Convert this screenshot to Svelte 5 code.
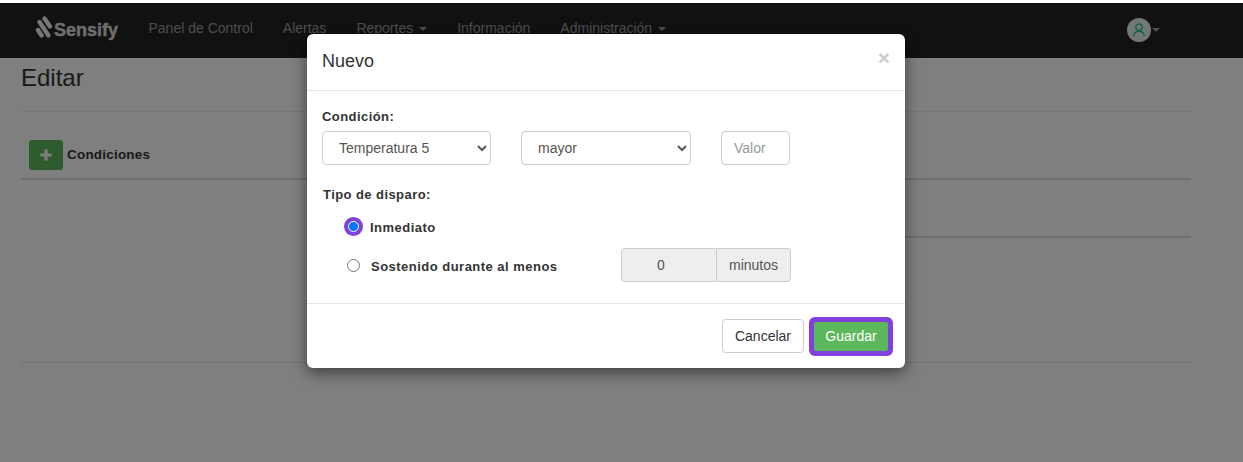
<script>
  const menu = [
    { label: 'Panel de Control' },
    { label: 'Alertas' },
    { label: 'Reportes', caret: true },
    { label: 'Información' },
    { label: 'Administración', caret: true }
  ];
</script>

<div class="page">
  <nav class="navbar">
    <div class="brand">
      <svg class="mark" width="20" height="24" viewBox="0 0 20 24" aria-hidden="true">
        <g fill="none" stroke="#eee" stroke-width="4.4" stroke-linecap="round">
          <path d="M9.5 3.5 L15 11.5" />
          <path d="M4.5 7 L13.5 20.5" />
          <path d="M3 15 L6.5 20.5" />
        </g>
      </svg>
      <span class="brand-text">Sensify</span>
    </div>
    <ul class="menu">
      {#each menu as item}
        <li>{item.label}{#if item.caret}<span class="caret"></span>{/if}</li>
      {/each}
    </ul>
    <div class="user">
      <span class="avatar">
        <svg width="16" height="16" viewBox="0 0 16 16" fill="none" stroke="#1fc08f" stroke-width="1.3" aria-hidden="true">
          <circle cx="8" cy="5.2" r="3.2" />
          <path d="M2.6 14.2 C3 10.8 5 9.4 8 9.4 C11 9.4 13 10.8 13.4 14.2" />
        </svg>
      </span>
      <span class="caret user-caret"></span>
    </div>
  </nav>

  <main class="content">
    <h3 class="title">Editar</h3>
    <hr class="rule first" />
    <div class="cond-head">
      <button class="add" type="button" aria-label="Agregar">
        <svg width="12" height="12" viewBox="0 0 12 12" aria-hidden="true"><path d="M4.4 0.5h3.2v3.9h3.9v3.2H7.6v3.9H4.4V7.6H0.5V4.4h3.9z" fill="#fff" /></svg>
      </button>
      <strong>Condiciones</strong>
    </div>
    <hr class="rule thick" />
    <hr class="rule mid" />
    <hr class="rule last" />
  </main>

  <div class="overlay"></div>

  <div class="modal">
    <header class="m-head">
      <h4>Nuevo</h4>
      <span class="close">×</span>
    </header>
    <section class="m-body">
      <div class="lbl">Condición:</div>
      <div class="row">
        <select class="ctl s1"><option>Temperatura 5</option></select>
        <select class="ctl s2"><option>mayor</option></select>
        <input class="ctl val" placeholder="Valor" />
      </div>
      <div class="lbl tipo">Tipo de disparo:</div>
      <label class="radio r1">
        <span class="dot on"></span>
        <span class="inm">Inmediato</span>
      </label>
      <div class="radio r2">
        <span class="dot"></span>
        <span class="sost">Sostenido durante al menos</span>
        <div class="group">
          <span class="num">0</span>
          <span class="addon">minutos</span>
        </div>
      </div>
    </section>
    <footer class="m-foot">
      <button class="btn cancel" type="button">Cancelar</button>
      <button class="btn save" type="button">Guardar</button>
    </footer>
  </div>
</div>

<style>
  :global(body) {
    margin: 0;
    background: #fff;
    font-family: "Liberation Sans", Arial, sans-serif;
    font-size: 14px;
    color: #333;
  }
  .page {
    position: relative;
    width: 1243px;
    height: 462px;
    overflow: hidden;
    box-sizing: border-box;
    padding-top: 3px;
  }
  .navbar {
    height: 55px;
    background: #222;
    display: flex;
    align-items: center;
    color: #9d9d9d;
  }
  .brand {
    display: flex;
    align-items: center;
    margin-left: 35px;
    width: 113.5px;
  }
  .mark { margin-top: -8px; }
  .brand-text {
    font-weight: 700;
    font-size: 18px;
    color: #ddd;
    -webkit-text-stroke: .4px #ddd;
    margin-left: -1px;
    margin-top: 0;
  }
  .menu {
    display: flex;
    gap: 30px;
    list-style: none;
    margin: 0;
    padding: 0;
    font-size: 14px;
    margin-top: -5px;
  }
  .caret {
    display: inline-block;
    margin-left: 6px;
    vertical-align: middle;
    border-top: 4px solid #9d9d9d;
    border-left: 4px solid transparent;
    border-right: 4px solid transparent;
  }
  .user {
    position: absolute;
    left: 1127px;
    top: 18px;
    display: flex;
    align-items: center;
  }
  .avatar {
    width: 24px;
    height: 24px;
    border-radius: 50%;
    background: #e6f0ee;
    display: flex;
    align-items: center;
    justify-content: center;
  }
  .user-caret { margin-left: 1px; }
  .content { padding: 0 52px 0 21px; }
  .title {
    margin: 7px 0 0;
    font-size: 24px;
    font-weight: 400;
    line-height: 26px;
  }
  .rule {
    border: 0;
    border-top: 1px solid #eee;
    margin: 0;
  }
  .first { margin-top: 20px; }
  .cond-head {
    display: flex;
    align-items: center;
    height: 30px;
    margin-top: 28px;
    padding-left: 8px;
  }
  .cond-head strong { margin: -2px 0 0 4px; font-size: 13.5px; letter-spacing: .2px; }
  .add {
    width: 34px;
    height: 30px;
    border: 0;
    border-radius: 3px;
    background: #5cb85c;
    padding: 0;
    display: flex;
    align-items: center;
    justify-content: center;
  }
  .thick { border-top: 2px solid #ddd; margin-top: 8px; }
  .mid { margin: 56px 0 0 300px; border-top: 2px solid #ddd; }
  .last { margin-top: 124px; border-top-color: #e4e4e4; }
  .overlay {
    position: absolute;
    left: 0;
    right: 0;
    top: 3px;
    bottom: 0;
    background: rgba(0, 0, 0, .5);
  }
  .modal {
    position: absolute;
    left: 307px;
    top: 34px;
    width: 598px;
    height: 334px;
    background: #fff;
    border-radius: 6px;
    box-shadow: 0 5px 15px rgba(0, 0, 0, .5);
    display: flex;
    flex-direction: column;
  }
  .m-head {
    height: 56px;
    box-sizing: content-box;
    border-bottom: 1px solid #e5e5e5;
    padding: 0 15px;
    display: flex;
    align-items: center;
    justify-content: space-between;
  }
  .m-head h4 {
    margin: -2px 0 0;
    font-size: 18px;
    font-weight: 400;
    line-height: 20px;
    color: #333;
  }
  .close {
    font-size: 21px;
    font-weight: 700;
    line-height: 1;
    color: #000;
    opacity: .2;
    margin-top: -10px;
  }
  .m-body {
    flex: 1;
    padding: 16px 15px 0;
  }
  .lbl {
    font-weight: 700;
    line-height: 20px;
    letter-spacing: .43px;
    font-size: 13px;
  }
  .row {
    display: flex;
    gap: 30px;
    margin-top: 4px;
  }
  .ctl {
    box-sizing: border-box;
    height: 34px;
    border: 1px solid #ccc;
    border-radius: 4px;
    background: #fff;
    color: #555;
    font: 14px "Liberation Sans", Arial, sans-serif;
    padding: 6px 12px;
  }
  .s1 { width: 169px; }
  .s2 { width: 170px; }
  .val { width: 69px; }
  .val::placeholder { color: #999; opacity: 1; }
  .tipo { margin-top: 20px; margin-left: 1px; }
  .radio {
    display: flex;
    align-items: center;
    font-weight: 700;
    font-size: 13px;
    letter-spacing: .48px;
  }
  .r1 { margin-top: 11px; height: 20px; margin-left: 22px; }
  .r2 { margin-top: 12px; height: 34px; margin-left: 25px; }
  .dot {
    box-sizing: border-box;
    width: 13px;
    height: 13px;
    border-radius: 50%;
    border: 1px solid #767676;
    background: #fff;
  }
  .dot.on {
    width: 11px;
    height: 11px;
    margin: 0 4px;
    border: 1.5px solid #fff;
    background: #0075ff;
    box-shadow: 0 0 0 4px #813fdb;
  }
  .inm { margin: 2px 0 0 7px; }
  .sost { margin: 2px 0 0 11px; width: 250px; }
  .group {
    display: flex;
    height: 34px;
    font-weight: 400;
    font-size: 14px;
    letter-spacing: 0;
    color: #555;
  }
  .num {
    box-sizing: border-box;
    width: 96px;
    padding-right: 16px;
    background: #eee;
    border: 1px solid #ccc;
    border-radius: 4px 0 0 4px;
    display: flex;
    align-items: center;
    justify-content: center;
  }
  .addon {
    box-sizing: border-box;
    width: 74px;
    background: #eee;
    border: 1px solid #ccc;
    border-left: 0;
    border-radius: 0 4px 4px 0;
    display: flex;
    align-items: center;
    justify-content: center;
  }
  .m-foot {
    border-top: 1px solid #e5e5e5;
    height: 65px;
    box-sizing: border-box;
    display: flex;
    justify-content: flex-end;
    align-items: center;
    gap: 10px;
    padding: 0 17px 0 0;
  }
  .btn {
    box-sizing: border-box;
    height: 34px;
    border-radius: 4px;
    font: 14px "Liberation Sans", Arial, sans-serif;
    padding: 6px 12px;
    border: 1px solid #ccc;
    background: #fff;
    color: #333;
  }
  .save {
    width: 74px;
    height: 29px;
    padding: 0;
    background: #5cb85c;
    border: 0;
    border-radius: 2px;
    color: #fff;
    box-shadow: 0 0 0 5px #813fdb;
  }
</style>
